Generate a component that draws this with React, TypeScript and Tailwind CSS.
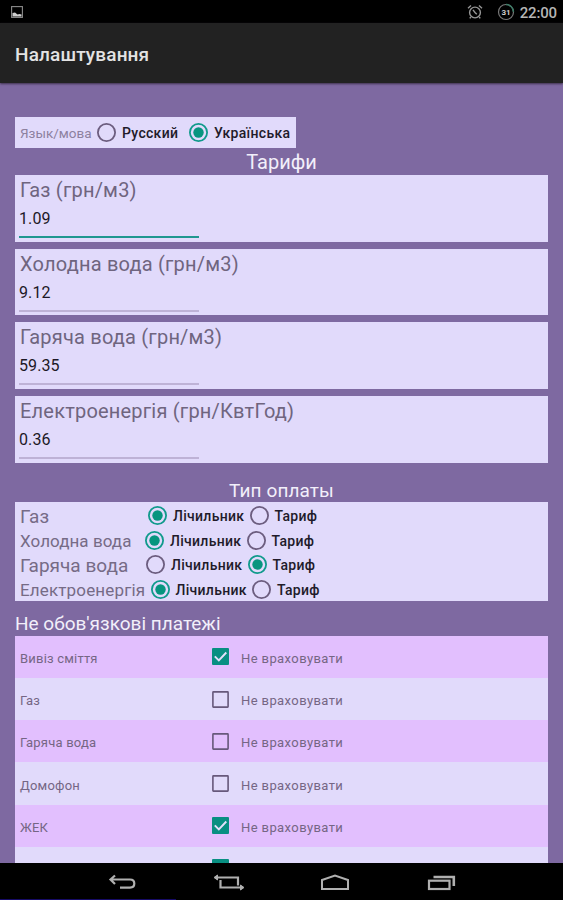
import React, { useState } from "react";
import clsx from "clsx";

interface Tariff {
  label: string;
  value: string;
}

interface PaymentType {
  label: string;
  labelClass: string;
  metered: boolean;
}

interface OptionalPayment {
  label: string;
  skip: boolean;
}

const tariffs: Tariff[] = [
  { label: "Газ (грн/м3)", value: "1.09" },
  { label: "Холодна вода (грн/м3)", value: "9.12" },
  { label: "Гаряча вода (грн/м3)", value: "59.35" },
  { label: "Електроенергія (грн/КвтГод)", value: "0.36" },
];

const paymentTypes: PaymentType[] = [
  { label: "Газ", labelClass: "w-[128px] text-[19px]", metered: true },
  { label: "Холодна вода", labelClass: "w-[125px] text-[17px] tracking-[0.05px]", metered: true },
  { label: "Гаряча вода", labelClass: "w-[126px] text-[19px] tracking-[0px]", metered: false },
  { label: "Електроенергія", labelClass: "w-[130.5px] text-[17px] tracking-[0.15px]", metered: true },
];

const initialPayments: OptionalPayment[] = [
  { label: "Вивіз сміття", skip: true },
  { label: "Газ", skip: false },
  { label: "Гаряча вода", skip: false },
  { label: "Домофон", skip: false },
  { label: "ЖЕК", skip: true },
];

function Radio({ checked }: { checked: boolean }) {
  return (
    <svg viewBox="0 0 19 19" className="size-[19px] shrink-0" fill="none">
      <circle cx="9.5" cy="9.5" r="8.6" stroke={checked ? "#109a8c" : "#6c5d7f"} strokeWidth="1.8" />
      {checked && <circle cx="9.5" cy="9.5" r="5.2" fill="#07957f" />}
    </svg>
  );
}

function Checkbox({ checked }: { checked: boolean }) {
  return (
    <svg viewBox="0 0 17 17" className="size-[17px] shrink-0">
      {checked ? (
        <>
          <rect width="17" height="17" rx="1" fill="#088f82" />
          <path d="M2.8 8.3l4 4 7.5-7.8" fill="none" stroke="#e3e0fb" strokeWidth="1.9" />
        </>
      ) : (
        <rect x="0.9" y="0.9" width="15.2" height="15.2" rx="0.5" fill="none" stroke="#67587b" strokeWidth="1.6" />
      )}
    </svg>
  );
}

function StatusBar() {
  return (
    <div className="flex h-[23px] shrink-0 items-center bg-black text-[#b5b5b5]">
      <svg viewBox="0 0 12 12" className="ml-[11px] h-3 w-3">
        <rect x="0.6" y="0.6" width="10.8" height="10.8" fill="none" stroke="#8c8c8c" strokeWidth="1.1" />
        <path d="M1.5 10.5V7L4 6.5l2.5 2 2-.5 2 .5v2z" fill="#d0d0d0" />
      </svg>
      <svg viewBox="0 0 16 16" className="ml-auto size-4" fill="none" stroke="#969696" strokeWidth="1.4">
        <circle cx="8" cy="8.5" r="5.4" />
        <path d="M1 4.2L4 1.5M15 4.2L12 1.5M3.8 13l-1 1.4M12.2 13l1 1.4M6 5.8L8 8.5l1.8 1.8" />
      </svg>
      <svg viewBox="0 0 18 18" className="ml-[14px] size-[18px]">
        <circle cx="9" cy="9" r="7.5" fill="none" stroke="#777" strokeWidth="1.2" />
        <path d="M9 1.5A7.5 7.5 0 0 1 16.5 9" fill="none" stroke="#3c7b66" strokeWidth="1.4" />
        <text x="9" y="11.8" textAnchor="middle" fontSize="8" fontWeight="700" fill="#d0d0d0">
          31
        </text>
      </svg>
      <span className="mr-[6px] ml-[5px] pt-[3px] text-[15px] leading-5 font-medium tracking-[-0.15px]">22:00</span>
    </div>
  );
}

function NavBar() {
  return (
    <div className="relative flex h-[37px] shrink-0 items-center bg-black pt-[3px] text-[#b0b0b0]">
      <svg viewBox="0 0 28 20" className="ml-[108px] h-5 w-7" fill="none" stroke="currentColor" strokeWidth="2.2">
        <path d="M3 6.5h19c2.6 0 4.3 1.3 4.3 4s-1.7 4.1-4.3 4.1H12M7 2.5l-4.5 4L7 11" />
      </svg>
      <svg viewBox="0 0 32 20" className="ml-[77px] h-5 w-8" fill="none" stroke="currentColor" strokeWidth="2.2">
        <path d="M3 4.5h22v8M7.5 7v7.5H29" />
        <path d="M4.5 2L1 4.5 4.5 7zM27.5 12l3.5 2.5-3.5 2.5z" fill="currentColor" strokeWidth="1" />
      </svg>
      <svg viewBox="0 0 30 20" className="ml-[75px] h-5 w-[30px]" fill="none" stroke="currentColor" strokeWidth="2">
        <path d="M2 16V7l13-4.5L28 7v9z" />
      </svg>
      <svg viewBox="0 0 30 20" className="ml-[77px] h-5 w-[30px]" fill="none" stroke="currentColor">
        <rect x="2" y="7.7" width="20.5" height="8.3" strokeWidth="2.2" />
        <path d="M6.5 4h20.3v9" strokeWidth="2.6" />
      </svg>
      <div className="absolute bottom-0 left-0 h-px w-[176px] bg-[#160b67]" />
    </div>
  );
}

export default function App() {
  const [lang, setLang] = useState("uk");
  const [types, setTypes] = useState(paymentTypes);
  const [payments, setPayments] = useState(initialPayments);

  const setMetered = (index: number, metered: boolean) => {
    setTypes((prev) => prev.map((t, i) => (i === index ? { ...t, metered } : t)));
  };

  const togglePayment = (index: number) => {
    setPayments((prev) => prev.map((p, i) => (i === index ? { ...p, skip: !p.skip } : p)));
  };

  return (
    <div className="flex h-[900px] w-[563px] flex-col overflow-hidden bg-[#7e69a1] font-['Roboto',sans-serif]">
      <StatusBar />
      <header className="z-10 flex h-[60px] shrink-0 items-center bg-[#222] px-[15px] pt-[4px] shadow-[0_1px_2px_#3d304b]">
        <h1 className="text-[19px] font-medium tracking-[0.15px] text-[#e3e3e3]">Налаштування</h1>
      </header>

      <main className="min-h-0 flex-1 overflow-hidden px-[15px] pt-[34px]">
        {/* Вибір мови */}
        <div className="flex h-[31px] w-[281px] items-center bg-[#e1dafb] pl-[5px] text-[14px]">
          <span className="w-[77px] pt-px text-[13.5px] whitespace-nowrap text-[#8d819f]">Язык/мова</span>
          <button className="flex items-center" onClick={() => setLang("ru")}>
            <Radio checked={lang === "ru"} />
            <span className="ml-[6px] w-[67px] pt-px text-left font-medium tracking-[0.3px] text-[#211b2a]">Русский</span>
          </button>
          <button className="flex items-center" onClick={() => setLang("uk")}>
            <Radio checked={lang === "uk"} />
            <span className="ml-[6px] pt-px font-medium tracking-[0.3px] text-[#211b2a]">Українська</span>
          </button>
        </div>

        <h2 className="h-[27px] text-center text-[20px] leading-[28px] text-[#f2effa]">Тарифи</h2>
        <div className="flex flex-col gap-[7px]">
          {tariffs.map((t, i) => (
            <div key={t.label} className="h-[66.7px] bg-[#e1dafb] px-1">
              <div className="pl-px text-[20px] leading-[30px] tracking-[0.2px] text-[#6f657f]">{t.label}</div>
              <input
                defaultValue={t.value}
                className={clsx(
                  "block h-[33px] w-[180px] border-b-2 pb-[4px] text-[16px] tracking-[0.1px] text-[#1d1826] outline-none",
                  i === 0 ? "border-[#209790]" : "border-[#beb2d6]"
                )}
              />
            </div>
          ))}
        </div>

        {/* Тип оплаты */}
        <h2 className="mt-[13px] h-[26px] text-center text-[19px] leading-[30px] tracking-[0.1px] text-[#f2effa]">
          Тип оплаты
        </h2>
        <div className="h-[99px] bg-[#e1dafb] pt-[1.5px] pl-[5px]">
          {types.map((t, i) => (
            <div key={t.label} className="flex h-[24.5px] items-center text-[14px] tracking-[0.3px] text-[#211b2a]">
              <span className={clsx("shrink-0 pt-[3px] whitespace-nowrap text-[#766b86]", t.labelClass)}>{t.label}</span>
              <button className="flex items-center" onClick={() => setMetered(i, true)}>
                <Radio checked={t.metered} />
                <span className="ml-[6px] w-[76.5px] pt-[2px] text-left font-medium">Лічильник</span>
              </button>
              <button className="flex items-center" onClick={() => setMetered(i, false)}>
                <Radio checked={!t.metered} />
                <span className="ml-[6px] pt-[2px] font-medium">Тариф</span>
              </button>
            </div>
          ))}
        </div>

        <h2 className="h-[35px] pt-[8px] text-[19px] leading-[30px] text-[#f2effa]">Не обов'язкові платежі</h2>
        <div>
          {payments.map((p, i) => (
            <div
              key={p.label}
              className={clsx(
                "flex h-[42.2px] items-center pl-[5px] text-[13px] text-[#756684]",
                i % 2 === 0 ? "bg-[#e2bffe]" : "bg-[#e1dafb]"
              )}
            >
              <span className="w-[192px] pt-[4px] tracking-[0.2px]">{p.label}</span>
              <button className="flex items-center" onClick={() => togglePayment(i)}>
                <Checkbox checked={p.skip} />
                <span className="ml-[12px] pt-[4px] tracking-[0.4px]">Не враховувати</span>
              </button>
            </div>
          ))}
          {/* наступний рядок видно лише частково */}
          <div className="flex h-[42.2px] items-center bg-[#e1dafb] pl-[197px]">
            <Checkbox checked />
          </div>
        </div>
      </main>
      <NavBar />
    </div>
  );
}
